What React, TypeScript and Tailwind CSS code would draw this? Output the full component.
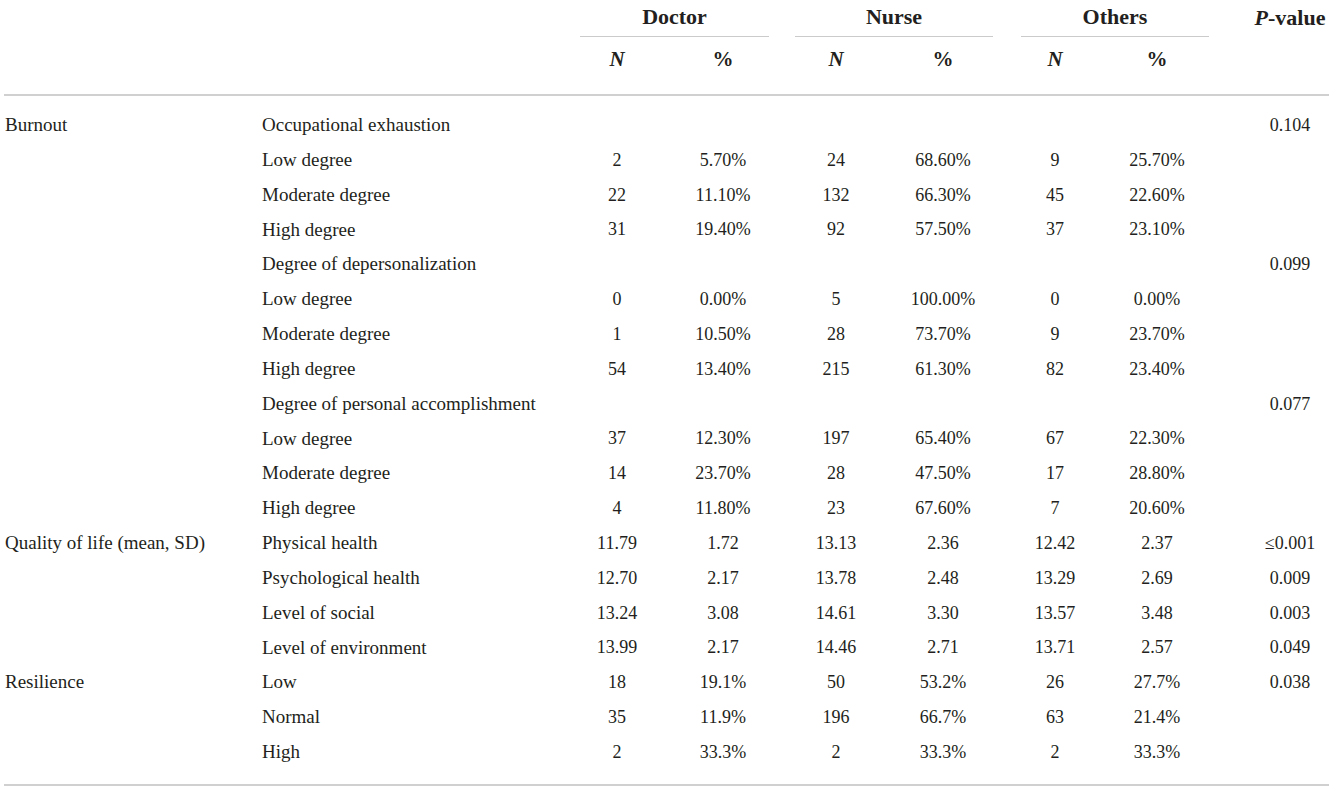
import React from 'react';

type Row = [string, string, string, string, string, string, string, string, string];

const rows: Row[] = [
  ['Burnout', 'Occupational exhaustion', '', '', '', '', '', '', '0.104'],
  ['', 'Low degree', '2', '5.70%', '24', '68.60%', '9', '25.70%', ''],
  ['', 'Moderate degree', '22', '11.10%', '132', '66.30%', '45', '22.60%', ''],
  ['', 'High degree', '31', '19.40%', '92', '57.50%', '37', '23.10%', ''],
  ['', 'Degree of depersonalization', '', '', '', '', '', '', '0.099'],
  ['', 'Low degree', '0', '0.00%', '5', '100.00%', '0', '0.00%', ''],
  ['', 'Moderate degree', '1', '10.50%', '28', '73.70%', '9', '23.70%', ''],
  ['', 'High degree', '54', '13.40%', '215', '61.30%', '82', '23.40%', ''],
  ['', 'Degree of personal accomplishment', '', '', '', '', '', '', '0.077'],
  ['', 'Low degree', '37', '12.30%', '197', '65.40%', '67', '22.30%', ''],
  ['', 'Moderate degree', '14', '23.70%', '28', '47.50%', '17', '28.80%', ''],
  ['', 'High degree', '4', '11.80%', '23', '67.60%', '7', '20.60%', ''],
  ['Quality of life (mean, SD)', 'Physical health', '11.79', '1.72', '13.13', '2.36', '12.42', '2.37', '≤0.001'],
  ['', 'Psychological health', '12.70', '2.17', '13.78', '2.48', '13.29', '2.69', '0.009'],
  ['', 'Level of social', '13.24', '3.08', '14.61', '3.30', '13.57', '3.48', '0.003'],
  ['', 'Level of environment', '13.99', '2.17', '14.46', '2.71', '13.71', '2.57', '0.049'],
  ['Resilience', 'Low', '18', '19.1%', '50', '53.2%', '26', '27.7%', '0.038'],
  ['', 'Normal', '35', '11.9%', '196', '66.7%', '63', '21.4%', ''],
  ['', 'High', '2', '33.3%', '2', '33.3%', '2', '33.3%', ''],
];

// fixed widths so the centred numbers land on the reference columns
const numCols = ['w-[100px]', 'w-[112px]', 'w-[114px]', 'w-[100px]', 'w-[124px]', 'w-[80px]'];

const groups = [
  { name: 'Doctor', box: 'w-[212px] flex flex-col', inset: 'ml-[13px] mr-[10px]' },
  { name: 'Nurse', box: 'w-[214px] flex flex-col', inset: 'ml-[16px]' },
  { name: 'Others', box: 'w-[204px] flex flex-col', inset: 'ml-[28px] -mr-[12px]' },
];

const App: React.FC = () => {
  return (
    <div className="w-[1333px] h-[791px] bg-white text-[#231f20] font-['Liberation_Serif',serif] text-[18px] overflow-hidden">
      {/* Header: group titles */}
      <div className="flex h-[37px] pl-[567px]">
        {groups.map((g) => (
          <div key={g.name} className={g.box}>
            <div className={`flex-1 flex items-center justify-center font-bold text-[22px] pb-[3px] ${g.inset}`}>
              {g.name}
            </div>
            <div className={`h-[2px] bg-[#cbcbcb] ${g.inset}`} />
          </div>
        ))}
        <div className="w-[136px] pl-[50px] flex items-center justify-center font-bold text-[22px] pb-[3px]">
          <span>
            <i>P</i>-value
          </span>
        </div>
      </div>

      {/* Header: N / % */}
      <div className="flex h-[57px] items-center pb-[11px] pl-[567px] font-bold text-[21px]">
        {numCols.map((w, i) => (
          <div key={i} className={`${w} text-center`}>
            {i % 2 === 0 ? <i>N</i> : '%'}
          </div>
        ))}
      </div>

      <div className="h-[2px] bg-[#d0d0d0] mx-[4px]" />

      {/* Body */}
      <div className="pt-[12px] pb-[14px]">
        {rows.map((r, ri) => (
          <div key={ri} className="flex items-center h-[34.83px]">
            <div className="w-[257px] pl-[5px] whitespace-nowrap text-[19px]">{r[0]}</div>
            <div className="w-[310px] pl-[5px] whitespace-nowrap text-[19px]">{r[1]}</div>
            {numCols.map((w, i) => (
              <div key={i} className={`${w} text-center`}>
                {r[i + 2]}
              </div>
            ))}
            <div className="w-[136px] pl-[50px] text-center">{r[8]}</div>
          </div>
        ))}
      </div>

      <div className="h-[2px] bg-[#d0d0d0] mx-[4px]" />
    </div>
  );
};

export default App;
